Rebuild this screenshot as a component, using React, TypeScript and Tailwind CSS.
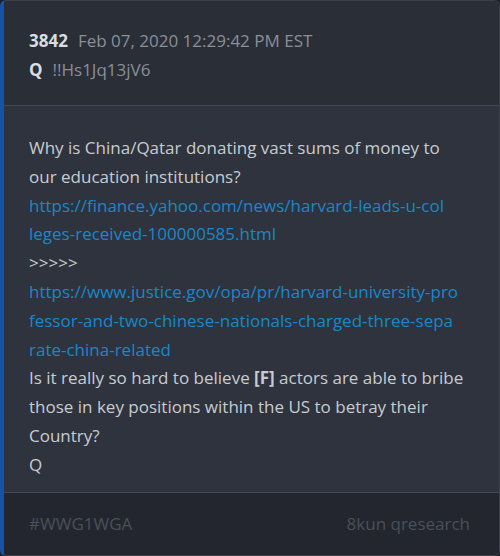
export default function App() {
  return (
    <div className="w-[500px] h-[556px] bg-[#1e2128]" style={{ fontFamily: '"Open Sans", sans-serif' }}>
      <div className="h-full flex flex-col rounded-md border border-[#3b404a] border-l-4 border-l-[#1553a6] overflow-hidden">
        <div className="bg-[#2a2e37] px-[25px] pt-[25px] pb-[21px] text-[17px] leading-[29px] border-b border-[#434852]">
          <div>
            <span className="font-bold text-[#d9dce0]">3842</span>
            <span className="ml-[10px] text-[#8a8f98]">Feb 07, 2020 12:29:42 PM EST</span>
          </div>
          <div>
            <span className="font-bold text-[#d9dce0]">Q</span>
            <span className="ml-[10px] text-[#8a8f98]">!!Hs1Jq13jV6</span>
          </div>
        </div>
        <div className="flex-1 bg-[#2e333d] pl-[25px] pr-[33px] pt-[28px] text-[17px] leading-[28.8px] text-[#c8ccd2] border-b border-[#434852]">
          <p>Why is China/Qatar donating vast sums of money to our education institutions?</p>
          <p className="text-[#1a87c9]">
            <span className="block whitespace-nowrap">https://finance.yahoo.com/news/harvard-leads-u-col</span>
            <span className="block whitespace-nowrap">leges-received-100000585.html</span>
          </p>
          <p>&gt;&gt;&gt;&gt;&gt;</p>
          <p className="text-[#1a87c9]">
            <span className="block whitespace-nowrap">https://www.justice.gov/opa/pr/harvard-university-pro</span>
            <span className="block whitespace-nowrap">fessor-and-two-chinese-nationals-charged-three-sepa</span>
            <span className="block whitespace-nowrap">rate-china-related</span>
          </p>
          <p>
            Is it really so hard to believe <span className="font-bold">[F]</span> actors are able to bribe those in key positions within the US to betray their Country?
          </p>
          <p>Q</p>
        </div>
        <div className="h-[62px] bg-[#23262e] flex items-center justify-between pl-[25px] pr-[29px] text-[17px] text-[#4a4f59]">
          <span>#WWG1WGA</span>
          <span>8kun qresearch</span>
        </div>
      </div>
    </div>
  );
}
